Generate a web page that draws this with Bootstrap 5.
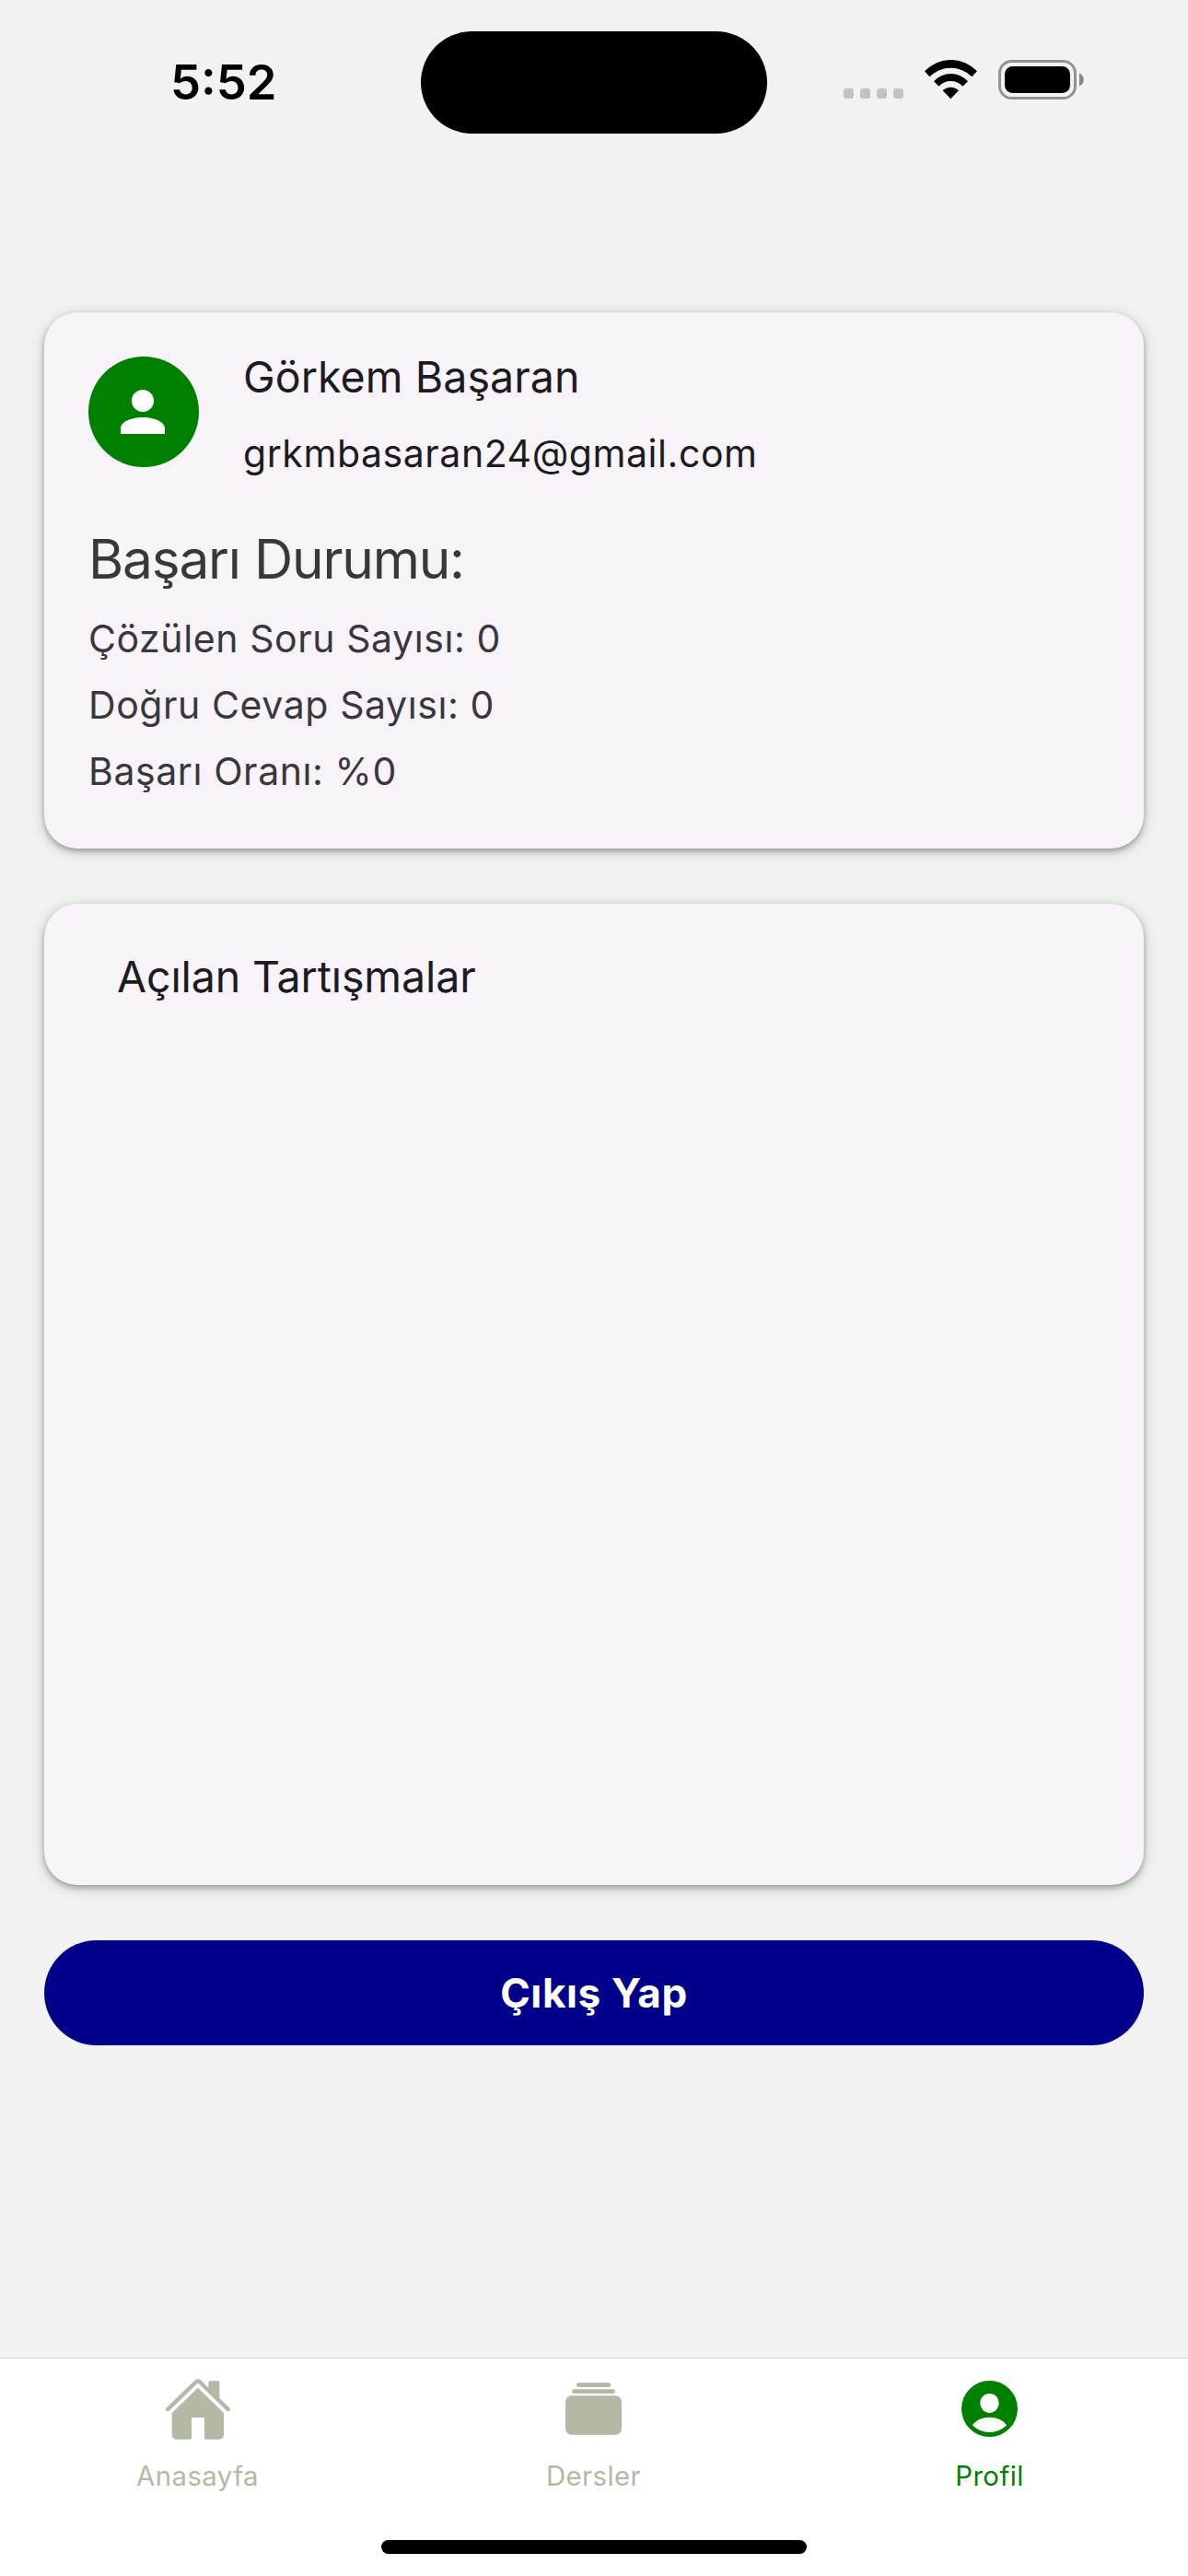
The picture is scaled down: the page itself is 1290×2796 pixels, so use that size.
<!DOCTYPE html>
<html lang="tr">
<head>
<meta charset="utf-8">
<meta name="viewport" content="width=device-width, initial-scale=1">
<title>Profil</title>
<link href="https://cdn.jsdelivr.net/npm/bootstrap@5.3.0/dist/css/bootstrap.min.css" rel="stylesheet">
<style>
body{background:#f2f2f2;font-family:Inter,"Noto Sans",sans-serif;color:#1c1b1f}
svg{display:block;flex:none}
.screen{width:1290px;height:2796px;overflow:hidden}

/* status bar */
.status-bar{height:339px}
.clock{width:457px;padding:59px 0 0 185px;font-size:52.5px;line-height:60px;font-weight:600;color:#000}
.island{width:376px;height:111px;margin-top:33.5px;background:#000}
.indicators{margin:65px 0 0 83px}
.signal{margin-top:31px;gap:7px}
.signal span{width:11px;height:11px;border-radius:3px;background:#c2c2c2}
.wifi{margin-left:22.5px}
.battery{margin-left:23px}

/* cards */
.content{padding:0 48px;gap:60px}
.panel{--bs-card-bg:#f7f3f9;--bs-card-border-width:0;--bs-card-border-radius:36px;--bs-card-color:#1c1b1f;
  box-shadow:0 3px 18px rgba(0,0,0,.15),0 3px 6px rgba(0,0,0,.3)}
.stats-panel{height:582px;padding:34px 48px 0}
.topics-panel{height:1065px;padding:43px 79px 0}
.identity{gap:48px}
.avatar{width:120px;height:120px;margin-bottom:1px;padding:0 2px 1px 0;background:#008000}
.title-text{font-size:46.5px;line-height:72px;font-weight:400;letter-spacing:.08px}
.topics-panel .title-text{letter-spacing:-.11px}
.mail{font-size:41px;line-height:59px;margin-top:18px;letter-spacing:.56px}
.stats-heading{font-size:58.5px;line-height:96px;font-weight:400;letter-spacing:-1.2px;margin:37px 0 2px;color:#38373b}
.stats li{font-size:41px;line-height:72px;letter-spacing:.59px;color:#38373b}
.logout{--bs-btn-bg:#00008b;--bs-btn-color:#fff;--bs-btn-hover-bg:#00006f;--bs-btn-hover-color:#fff;--bs-btn-border-width:0;
  height:114px;padding:0;font-size:44px;line-height:114px;font-weight:700;letter-spacing:.64px}

/* tab bar */
.tabs{height:237px;border-top:1px solid #d8d8d8;background:#fff}
.tabs .nav-link{color:#b2b9a5;padding:22px 0 0;border-radius:0;width:430px}
.tabs .nav-link.active{color:#008000}
.tab-icon{height:65px;padding-right:1px}
.tab-label{font-size:29.3px;line-height:36px;margin-top:23px;padding-right:1px;letter-spacing:.45px}
.home-bar{width:462px;height:15px;margin-bottom:24px;background:#000}
</style>
</head>
<body>
<div class="screen d-flex flex-column">
  <header class="status-bar d-flex align-items-start flex-shrink-0">
    <div class="clock">5:52</div>
    <div class="island rounded-pill"></div>
    <div class="indicators d-flex align-items-start">
      <div class="signal d-flex"><span></span><span></span><span></span><span></span></div>
      <svg class="wifi" width="57" height="43" viewBox="552 135 171 129">
        <path d="M552 172A117 117 0 0 1 723 172L706 190A98 98 0 0 0 568 190ZM582 205A74 74 0 0 1 693 205L676 221A54 54 0 0 0 598 221ZM611 235A36 36 0 0 1 663 235L637 262Z"/>
      </svg>
      <svg class="battery" width="94" height="43" viewBox="0 0 94 43">
        <rect x="1.5" y="1.5" width="82" height="40" rx="13" fill="none" stroke="#939393" stroke-width="3"/>
        <rect x="7" y="7" width="71" height="29" rx="8.5"/>
        <path d="M88 14.5A7.6 7.6 0 0 1 88 28.5Z" fill="#858585"/>
      </svg>
    </div>
  </header>

  <main class="content d-flex flex-column flex-grow-1">
    <section class="card panel stats-panel">
      <div class="identity d-flex align-items-center">
        <div class="avatar rounded-circle d-flex align-items-center justify-content-center">
          <svg width="72" height="72" viewBox="0 0 24 24" fill="#fff"><path d="M12 12a4 4 0 1 0 0-8 4 4 0 0 0 0 8Zm0 2c-4.42 0-8 1.79-8 4v2h16v-2c0-2.21-3.58-4-8-4Z"/></svg>
        </div>
        <div>
          <div class="title-text">Görkem Başaran</div>
          <div class="mail">grkmbasaran24@gmail.com</div>
        </div>
      </div>
      <h1 class="stats-heading">Başarı Durumu:</h1>
      <ul class="stats list-unstyled mb-0">
        <li>Çözülen Soru Sayısı: 0</li>
        <li>Doğru Cevap Sayısı: 0</li>
        <li>Başarı Oranı: %0</li>
      </ul>
    </section>

    <section class="card panel topics-panel">
      <h2 class="title-text mb-0">Açılan Tartışmalar</h2>
    </section>

    <button type="button" class="btn logout rounded-pill w-100">Çıkış Yap</button>
  </main>

  <footer class="tabs d-flex flex-column align-items-center justify-content-between flex-shrink-0">
    <nav class="nav flex-nowrap">
      <a class="nav-link d-flex flex-column align-items-center" href="#">
        <span class="tab-icon d-flex align-items-center">
          <svg width="70" height="66" viewBox="179 125 210 198" fill="currentColor">
            <path d="M185.5 224.5L277 135.5Q283.5 129 290 135.5L382.5 224.5" fill="none" stroke="currentColor" stroke-width="13" stroke-linecap="round"/>
            <path d="M318 160V137a5 5 0 0 1 5-5h26a5 5 0 0 1 5 5V195Z"/>
            <path d="M199 236L283.5 154L368 236V308a14 14 0 0 1-14 14H310a5 5 0 0 1-5-5V251H263V317a5 5 0 0 1-5 5H213a14 14 0 0 1-14-14Z"/>
          </svg>
        </span>
        <span class="tab-label">Anasayfa</span>
      </a>
      <a class="nav-link d-flex flex-column align-items-center" href="#">
        <span class="tab-icon d-flex align-items-center">
          <svg width="61" height="57" viewBox="162 138 183 171" fill="currentColor">
            <rect x="197.5" y="139" width="112" height="14" rx="7"/>
            <rect x="183.5" y="160" width="140" height="14" rx="7"/>
            <rect x="162" y="181" width="183" height="127" rx="20"/>
          </svg>
        </span>
        <span class="tab-label">Dersler</span>
      </a>
      <a class="nav-link active d-flex flex-column align-items-center" href="#">
        <span class="tab-icon d-flex align-items-center">
          <svg width="61" height="61" viewBox="192 132 183 183">
            <circle cx="283.5" cy="223.5" r="91.5" fill="currentColor"/>
            <path d="M283.5 174C301 174 314 187 314 205C314 222 301 237 283.5 237S253 222 253 205C253 187 266 174 283.5 174ZM228 277C240 260 262 251.5 283.5 251.5S327 260 339 277C325 292 305 300 283.5 300S242 292 228 277Z" fill="#fff"/>
          </svg>
        </span>
        <span class="tab-label">Profil</span>
      </a>
    </nav>
    <div class="home-bar rounded-pill"></div>
  </footer>
</div>
<script src="https://cdn.jsdelivr.net/npm/bootstrap@5.3.0/dist/js/bootstrap.bundle.min.js"></script>
</body>
</html>
